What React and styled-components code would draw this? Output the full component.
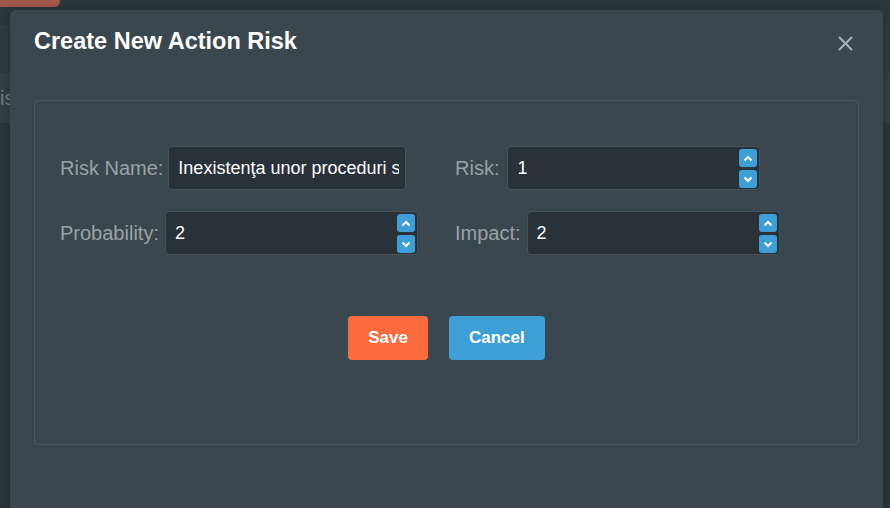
import React, { useState } from 'react';
import styled, { createGlobalStyle } from 'styled-components';

const GlobalStyle = createGlobalStyle`
    html, body {
        margin: 0;
        padding: 0;
        background: #2a353b;
        font-family: "Liberation Sans", Arial, sans-serif;
    }
`;

const Page = styled.div`
    position: relative;
    width: 890px;
    height: 508px;
    overflow: hidden;
    background: #2a353b;
`;

// page behind the modal, already dimmed by the overlay
const TopBar = styled.div`
    height: 27px;
    background: #2c373d;
    border-bottom: 1px solid #323e44;
    box-sizing: border-box;
`;

const OrangeTab = styled.div`
    width: 60px;
    height: 7px;
    background: #a0584a;
    border-bottom-right-radius: 6px;
`;

const Band = styled.div`
    height: ${p => p.h}px;
    background: ${p => p.bg};
    display: flex;
    align-items: center;
    font-size: 20px;
    color: #707b81;
    overflow: hidden;
    white-space: nowrap;
`;

const Modal = styled.div`
    position: absolute;
    top: 10px;
    left: 10px;
    width: 873px;
    height: 520px;
    background: #3a474e;
    border-radius: 6px;
    box-shadow: 0 0 8px rgba(0,0,0,0.25);
`;

const Header = styled.div`
    display: flex;
    justify-content: space-between;
    align-items: flex-start;
    padding: 17px 30px 0 24px;
`;

const Title = styled.h2`
    margin: 0;
    font-size: 23.5px;
    line-height: 28px;
    font-weight: bold;
    color: #ffffff;
`;

const CloseButton = styled.button`
    margin-top: 9px;
    width: 15px;
    height: 15px;
    padding: 0;
    border: none;
    background: none;
    cursor: pointer;
    display: flex;
`;

const Body = styled.div`
    padding: 45px 24px 0 24px;
`;

const Panel = styled.div`
    height: 345px;
    box-sizing: border-box;
    border: 1px solid #4a575f;
    border-radius: 4px;
    padding: 45px 0 0 25px;
`;

const FieldGrid = styled.div`
    display: grid;
    grid-template-columns: 395px 1fr;
    row-gap: 21px;
`;

const Field = styled.div`
    display: flex;
    align-items: center;
    gap: ${p => p.gap || 6}px;
`;

const Label = styled.label`
    font-size: 20px;
    color: #9aa2a7;
`;

const InputBox = styled.div`
    display: flex;
    width: ${p => p.w}px;
    height: 44px;
    box-sizing: border-box;
    background: #283238;
    border: 1px solid #45525a;
    border-radius: 4px;
    padding-right: ${p => p.pr || 2}px;
`;

const TextInput = styled.input`
    flex: 1;
    min-width: 0;
    border: none;
    outline: none;
    background: transparent;
    color: #ffffff;
    font-family: "Liberation Sans", Arial, sans-serif;
    font-size: 18px;
    padding: 0 0 0 9px;
    &::-webkit-outer-spin-button,
    &::-webkit-inner-spin-button {
        -webkit-appearance: none;
        margin: 0;
    }
`;

const Spinner = styled.div`
    display: flex;
    flex-direction: column;
    justify-content: center;
    gap: 3px;
    padding-top: 1px;
`;

const SpinButton = styled.button`
    width: 18px;
    height: 18px;
    padding: 0;
    border: none;
    border-radius: 3px;
    background: #3d9fd6;
    display: flex;
    align-items: center;
    justify-content: center;
    cursor: pointer;
`;

const Actions = styled.div`
    display: flex;
    justify-content: center;
    gap: 21px;
    margin-top: 61px;
    margin-left: -25px;
`;

const Button = styled.button`
    height: 44px;
    padding: 0 20px;
    border: none;
    border-radius: 4px;
    background: ${p => p.color};
    color: #ffffff;
    font-family: "Liberation Sans", Arial, sans-serif;
    font-size: 17px;
    font-weight: bold;
    cursor: pointer;
`;

function Chevron({ up }) {
    return (
        <svg width="10" height="7" viewBox="0 0 10 7">
            <polyline
                points={up ? '1.5,5.5 5,2 8.5,5.5' : '1.5,1.5 5,5 8.5,1.5'}
                fill="none"
                stroke="#ffffff"
                strokeWidth="2"
            />
        </svg>
    );
}

function NumberField({ label, value, onChange, gap }) {
    return (
        <Field gap={gap}>
            <Label>{label}</Label>
            <InputBox w={253}>
                <TextInput type="number" value={value} onChange={e => onChange(e.target.value)} />
                <Spinner>
                    <SpinButton onClick={() => onChange(Number(value) + 1)}><Chevron up /></SpinButton>
                    <SpinButton onClick={() => onChange(Number(value) - 1)}><Chevron /></SpinButton>
                </Spinner>
            </InputBox>
        </Field>
    );
}

export default function App() {
    const [form, setForm] = useState({
        name: 'Inexistenţa unor proceduri specifice',
        risk: 1,
        probability: 2,
        impact: 2,
    });
    const set = key => value => setForm({ ...form, [key]: value });

    return (
        <Page>
            <GlobalStyle />
            <TopBar><OrangeTab /></TopBar>
            <Band h={46} bg="#2e3a40" />
            <Band h={50} bg="#333f45">is</Band>

            <Modal>
                <Header>
                    <Title>Create New Action Risk</Title>
                    <CloseButton aria-label="close">
                        <svg width="15" height="15" viewBox="0 0 15 15">
                            <path d="M1 1 L14 14 M14 1 L1 14" stroke="#a6b3ba" strokeWidth="2" />
                        </svg>
                    </CloseButton>
                </Header>
                <Body>
                    <Panel>
                        <FieldGrid>
                            <Field gap={5}>
                                <Label>Risk Name:</Label>
                                <InputBox w={238} pr={6}>
                                    <TextInput value={form.name} onChange={e => set('name')(e.target.value)} />
                                </InputBox>
                            </Field>
                            <NumberField label="Risk:" gap={8} value={form.risk} onChange={set('risk')} />
                            <NumberField label="Probability:" value={form.probability} onChange={set('probability')} />
                            <NumberField label="Impact:" value={form.impact} onChange={set('impact')} />
                        </FieldGrid>
                        <Actions>
                            <Button color="#fe6b3e">Save</Button>
                            <Button color="#3d9fd6">Cancel</Button>
                        </Actions>
                    </Panel>
                </Body>
            </Modal>
        </Page>
    );
}
